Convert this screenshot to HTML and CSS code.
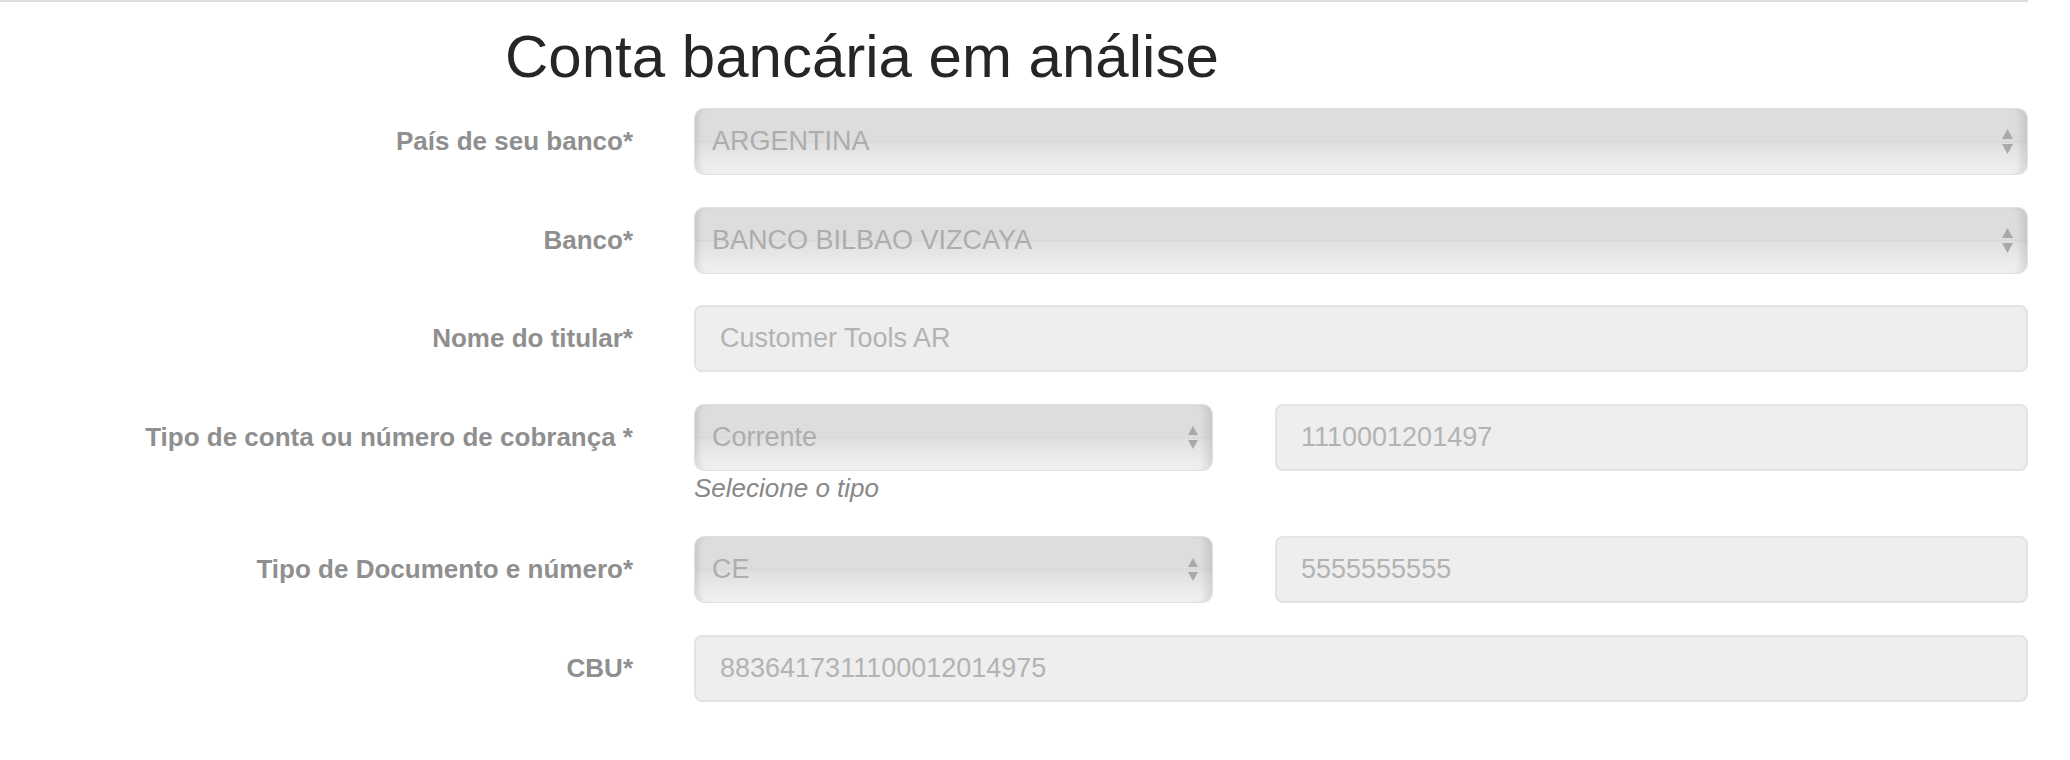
FILE: index.html
```html
<!DOCTYPE html>
<html lang="pt">
<head>
<meta charset="utf-8">
<title>Conta bancária em análise</title>
<link rel="stylesheet" href="styles.css">
</head>
<body>
<div class="page">
  <hr class="rule">
  <h2 class="title">Conta bancária em análise</h2>
  <form class="form">
    <div class="row">
      <label class="label">País de seu banco*</label>
      <div class="controls">
        <div class="select select-full">
          <span class="value">ARGENTINA</span>
          <svg class="arrows" width="11" height="25" viewBox="0 0 11 25"><polygon points="0,10 5.5,0 11,10"/><polygon points="0,15 11,15 5.5,25"/></svg>
        </div>
      </div>
    </div>
    <div class="row">
      <label class="label">Banco*</label>
      <div class="controls">
        <div class="select select-full">
          <span class="value">BANCO BILBAO VIZCAYA</span>
          <svg class="arrows" width="11" height="25" viewBox="0 0 11 25"><polygon points="0,10 5.5,0 11,10"/><polygon points="0,15 11,15 5.5,25"/></svg>
        </div>
      </div>
    </div>
    <div class="row">
      <label class="label">Nome do titular*</label>
      <div class="controls">
        <div class="input">Customer Tools AR</div>
      </div>
    </div>
    <div class="row">
      <label class="label">Tipo de conta ou número de cobrança *</label>
      <div class="controls split">
        <div class="half">
          <div class="select">
            <span class="value">Corrente</span>
            <svg class="arrows" width="10" height="23" viewBox="0 0 10 23"><polygon points="0,9 5,0 10,9"/><polygon points="0,14 10,14 5,23"/></svg>
          </div>
          <div class="help">Selecione o tipo</div>
        </div>
        <div class="input">1110001201497</div>
      </div>
    </div>
    <div class="row">
      <label class="label">Tipo de Documento e número*</label>
      <div class="controls split">
        <div class="half">
          <div class="select">
            <span class="value">CE</span>
            <svg class="arrows" width="10" height="23" viewBox="0 0 10 23"><polygon points="0,9 5,0 10,9"/><polygon points="0,14 10,14 5,23"/></svg>
          </div>
        </div>
        <div class="input">5555555555</div>
      </div>
    </div>
    <div class="row">
      <label class="label">CBU*</label>
      <div class="controls">
        <div class="input">8836417311100012014975</div>
      </div>
    </div>
  </form>
</div>
</body>
</html>
```
FILE: styles.css
```css
html, body {
  margin: 0;
  padding: 0;
  background: #ffffff;
}

body {
  font-family: "Liberation Sans", Arial, sans-serif;
}

.page {
  width: 2028px;
}

.rule {
  margin: 0;
  height: 0;
  border: 0;
  border-top: 2px solid #dedede;
}

.title {
  margin: 25px 0 0 0;
  padding-left: 505px;
  font-size: 60px;
  line-height: 60px;
  font-weight: normal;
  color: #262626;
}

.form {
  margin-top: 21px;
}

.row {
  display: flex;
  align-items: flex-start;
  margin-bottom: 31.5px;
}

.label {
  width: 633px;
  height: 67px;
  flex: none;
  display: flex;
  align-items: center;
  justify-content: flex-end;
  font-size: 26px;
  font-weight: bold;
  color: #8f8f8f;
  white-space: nowrap;
}

.controls {
  flex: 1;
  margin-left: 61px;
  display: flex;
}

.controls.split {
  gap: 62px;
  align-items: flex-start;
}

.half {
  width: 519px;
  flex: none;
}

.select {
  box-sizing: border-box;
  height: 67px;
  display: flex;
  align-items: center;
  padding: 0 14px 0 17px;
  border: 1px solid #e1e1e1;
  border-radius: 10px;
  background: linear-gradient(to bottom, #dddddd 0%, #dddddd 49%, #d9d9d9 50%, #e0e0e0 53%, #f1f1f1 100%);
  box-shadow: inset 7px 0 6px -4px rgba(0, 0, 0, 0.10), inset -12px 0 6px -6px rgba(0, 0, 0, 0.09);
  font-size: 27px;
  color: #adadad;
}

.select-full {
  flex: 1;
}

.value {
  flex: 1;
  white-space: nowrap;
}

.arrows {
  flex: none;
  fill: #a9a9a9;
}

.input {
  box-sizing: border-box;
  flex: 1;
  height: 67px;
  display: flex;
  align-items: center;
  padding-left: 24px;
  border: 2px solid #e3e3e3;
  border-radius: 8px;
  background: #eeeeee;
  font-size: 27px;
  color: #b3b3b3;
}

.help {
  font-size: 26px;
  line-height: 34px;
  font-style: italic;
  color: #888888;
}
```
